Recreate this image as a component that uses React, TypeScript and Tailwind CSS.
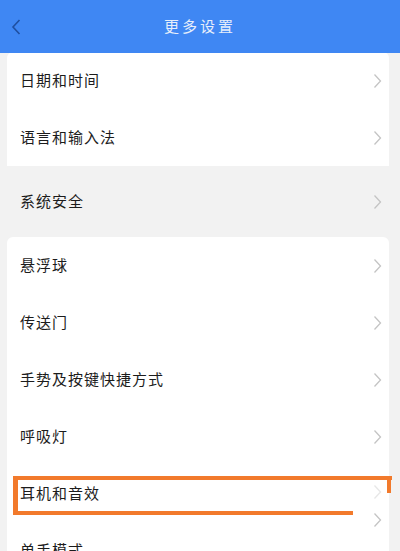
const font = { fontFamily: '"Noto Sans CJK SC", "Noto Sans", sans-serif' };

function Chevron({ className = '' }: { className?: string }) {
  return (
    <svg width="9" height="16" viewBox="0 0 9 16" className={className}>
      <polyline points="1.5,1.5 7.5,8 1.5,14.5" fill="none" stroke="#c4c4c4" strokeWidth="1.3" />
    </svg>
  );
}

function Row({ label, chevronClass = '' }: { label: string; chevronClass?: string }) {
  return (
    <div className="h-[57px] flex items-center justify-between pl-[13px] pr-[7px]">
      <span className="text-[15px] tracking-[1px] text-[#1c1c1c]">{label}</span>
      <Chevron className={chevronClass} />
    </div>
  );
}

export default function App() {
  return (
    <div className="relative w-[400px] h-[551px] overflow-hidden bg-[#f2f2f2]" style={font}>
      <header className="h-[53px] bg-[#3f87f3] flex items-center relative">
        <svg width="10" height="16" viewBox="0 0 10 16" className="ml-[11px]">
          <polyline points="8.5,1 2,8 8.5,15" fill="none" stroke="#1f4fa0" strokeWidth="1.6" />
        </svg>
        <h1 className="absolute left-0 right-0 text-center text-[15px] tracking-[3px] text-[#e6eefb]">
          更多设置
        </h1>
      </header>

      <div className="ml-[7px] mr-[11px] bg-white rounded-t-[6px] -mt-[1px]">
        <Row label="日期和时间" />
        <Row label="语言和输入法" />
      </div>

      <div className="h-[71px] flex items-center justify-between pl-[20px] pr-[18px]">
        <span className="text-[15px] tracking-[1px] text-[#1c1c1c]">系统安全</span>
        <Chevron />
      </div>

      <div className="ml-[7px] mr-[11px] bg-white rounded-t-[6px]">
        <Row label="悬浮球" />
        <Row label="传送门" />
        <Row label="手势及按键快捷方式" />
        <Row label="呼吸灯" />
        <Row label="耳机和音效" chevronClass="opacity-40 -mt-[4px]" />
        <Row label="单手模式" chevronClass="self-start -mt-[10px]" />
      </div>

      {/* orange annotation */}
      <div className="absolute left-[13px] top-[476px] w-[379px] h-[4px] bg-[#f27a2c]" />
      <div className="absolute left-[13px] top-[476px] w-[5px] h-[39px] bg-[#f27a2c]" />
      <div className="absolute left-[13px] top-[511px] w-[340px] h-[4px] bg-[#f27a2c]" />
      <div className="absolute left-[387px] top-[476px] w-[4px] h-[17px] bg-[#f27a2c]" />
    </div>
  );
}
